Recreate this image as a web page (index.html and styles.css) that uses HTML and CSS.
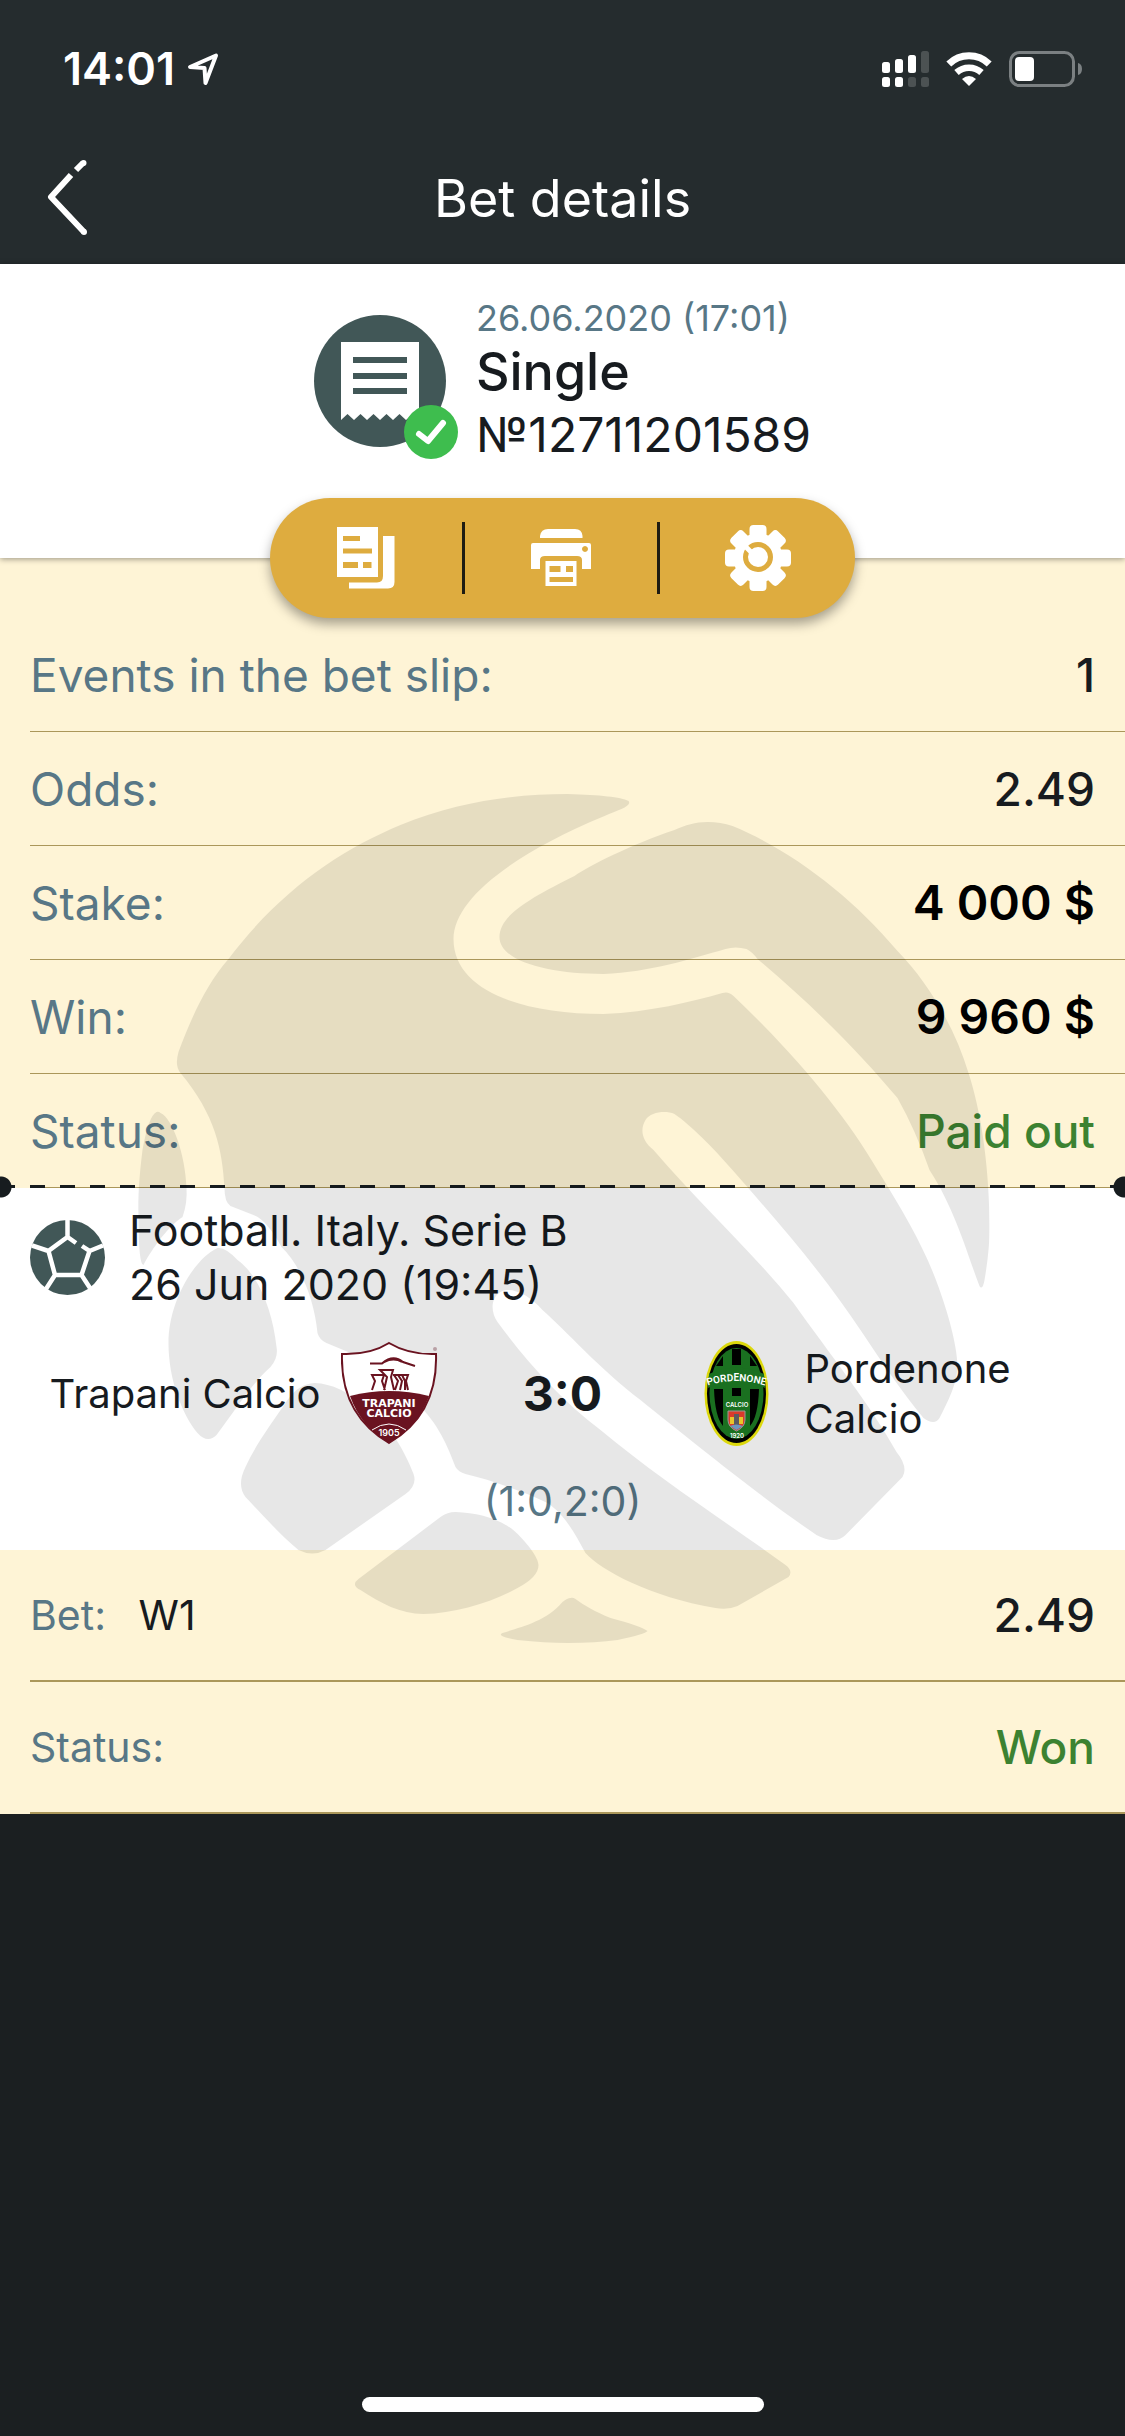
FILE: index.html
```html
<!DOCTYPE html>
<html lang="en">
<head>
  <meta charset="UTF-8" />
  <meta name="viewport" content="width=device-width, initial-scale=1.0" />
  <title>Bet details</title>
  <link rel="stylesheet" href="styles.css">
</head>
<body>

  <header class="top">
    <!-- Status bar -->
    <div class="status-bar">
      <div class="clock">
        <span>14:01</span>
        <svg width="32" height="34" viewBox="0 0 32 34" aria-hidden="true">
          <path d="M3 15 L29 3.500 L18.500 31 L17.500 16 Z" fill="none" stroke="#fff" stroke-width="4" stroke-linejoin="round" />
        </svg>
      </div>
      <div class="indicators">
        <svg width="47" height="36" viewBox="0 0 47 36" fill="#fff" aria-hidden="true">
          <rect x="0" y="11" width="8" height="11" rx="2.500" />
          <rect x="13" y="8" width="8" height="14" rx="2.500" />
          <rect x="26" y="4" width="8" height="18" rx="2.500" />
          <rect x="39" y="0" width="8" height="22" rx="2.500" opacity=".18" />
          <rect x="0" y="26" width="8" height="10" rx="2.500" />
          <rect x="13" y="26" width="8" height="10" rx="2.500" />
          <rect x="26" y="26" width="8" height="10" rx="2.500" opacity=".18" />
          <rect x="39" y="26" width="8" height="10" rx="2.500" opacity=".18" />
        </svg>
        <svg width="46" height="34" viewBox="0 0 46 34" aria-hidden="true">
          <path d="M2.800 12 A29 29 0 0 1 43.200 12" fill="none" stroke="#fff" stroke-width="7" />
          <path d="M10.500 20.500 A18.500 18.500 0 0 1 35.500 20.500" fill="none" stroke="#fff" stroke-width="6.500" />
          <path d="M23 34 L16 27 Q23 21 30 27 Z" fill="#fff" />
        </svg>
        <svg width="74" height="36" viewBox="0 0 74 36" aria-hidden="true">
          <rect x="1.500" y="1.500" width="63" height="33" rx="9" fill="none" stroke="#7b8082" stroke-width="3" />
          <rect x="6" y="6" width="19" height="24" rx="4" fill="#fff" />
          <path d="M69 12 Q73 13 73 18 Q73 23 69 24 Z" fill="#7b8082" />
        </svg>
      </div>
    </div>

    <nav class="nav-bar">
      <button class="back" aria-label="Back">
        <svg width="42" height="78" viewBox="0 0 42 78" fill="none" stroke="#fff" stroke-width="6" aria-hidden="true">
          <path d="M24 16 L4 38 L37 73" stroke-linejoin="round" />
          <path d="M29 11 L36 4" />
          <circle cx="36.500" cy="4" r="3" fill="#fff" stroke="none" />
          <circle cx="37" cy="73" r="3" fill="#fff" stroke="none" />
        </svg>
      </button>
      <h1>Bet details</h1>
    </nav>
  </header>

  <main>
    <!-- Bet slip heading -->
    <section class="slip">
      <div class="slip-head">
        <div class="slip-icon">
          <svg width="132" height="132" viewBox="0 0 132 132" aria-hidden="true">
            <circle cx="66" cy="66" r="66" fill="#415757" />
            <path d="M27 27 H105 V105 L98.500 99 L92 105 L85.500 99 L79 105 L72.500 99 L66 105 L59.500 99 L53 105 L46.500 99 L40 105 L33.500 99 L27 105 Z" fill="#fff" />
            <path d="M39 45 H93 M39 61 H93 M39 76 H93" stroke="#415757" stroke-width="6" />
          </svg>
          <svg class="badge" width="54" height="54" viewBox="0 0 54 54" aria-hidden="true">
            <circle cx="27" cy="27" r="27" fill="#3ebd4e" />
            <path d="M15 29 L24 36 L39 18" fill="none" stroke="#fff" stroke-width="6" stroke-linecap="round" stroke-linejoin="round" />
          </svg>
        </div>
        <div class="slip-text">
          <p class="date">26.06.2020 (17:01)</p>
          <h2>Single</h2>
          <p class="number">№12711201589</p>
        </div>
      </div>

      <div class="actions">
        <button aria-label="Copy">
          <svg width="58" height="62" viewBox="0 0 58 62" fill="#fff" aria-hidden="true">
            <path fill-rule="evenodd" d="M0 0 H41 V50 H0 Z M6 9 V14 H23 V9 Z M6 21.500 V26.500 H35 V21.500 Z M6 35 V41 H21 V35 Z M26 35 V41 H34.500 V35 Z" />
            <path d="M46 9 H57.500 V55 Q57.500 61.500 51 61.500 H12 V55.500 H40 Q46 55.500 46 49 Z" />
          </svg>
        </button>
        <button aria-label="Print">
          <svg width="60" height="58" viewBox="0 0 60 58" fill="#fff" aria-hidden="true">
            <path d="M9 9 V7 Q10 0 17 0 H44 Q51 0 51.500 7 V9 Z" />
            <path fill-rule="evenodd" d="M2 14 H58 Q60 14 60 16 V40 H51 V31 Q51 27 46 27 H14 Q9 27 9 31 V40 H0 V16 Q0 14 2 14 Z M54 17 a3 3 0 1 0 .01 0 Z" />
            <path fill-rule="evenodd" d="M14.500 32 H45.500 V57 H14.500 Z M18.500 37 V43 H29.500 V37 Z M35 37 V43 H42 V37 Z M18.500 48 V53 H42 V48 Z" />
          </svg>
        </button>
        <button aria-label="Settings">
          <svg width="66" height="66" viewBox="-33 -33 66 66" fill="#fff" aria-hidden="true">
            <circle r="24.500" />
            <g id="teeth">
              <rect x="-8.500" y="-33" width="17" height="66" rx="4" />
              <rect x="-33" y="-8.500" width="66" height="17" rx="4" />
            </g>
            <use href="#teeth" transform="rotate(45)" />
            <circle cy="-1" r="12.500" fill="none" stroke="#deac3f" stroke-width="5" />
            <path d="M-14 -13 L-4 -3" stroke="#fff" stroke-width="5" />
          </svg>
        </button>
      </div>
    </section>

    <div class="details">
      <!-- Ball watermark over the slip -->
      <svg class="watermark" width="853" height="850" viewBox="136 793 853 850" aria-hidden="true">
        <path d="M628 801 C632 806 618 810 604 816 C510 855 453 900 453 939 C453 990 520 1014 603 1014 C650 1012 690 1002 722 993 Q728 991 733 996 C795 1055 845 1115 877 1170 C905 1215 925 1250 938 1287 C950 1320 957 1350 957 1367 C956 1385 948 1400 939 1418 Q934 1426 923 1418 C900 1390 880 1360 862 1333 C820 1270 780 1225 732 1170 C712 1147 690 1125 674 1114 C665 1110 650 1112 645 1120 C640 1128 640 1140 653 1150 C700 1205 750 1250 793 1303 C830 1355 870 1405 896 1452 Q908 1467 902 1477 L845 1535 Q835 1545 816 1535 C760 1497 690 1440 640 1400 C600 1370 565 1330 542 1310 C528 1294 510 1286 500 1292 C490 1298 490 1312 497 1322 C525 1360 560 1400 600 1430 C660 1480 730 1525 785 1565 Q793 1571 788 1577 L737 1606 Q728 1610 715 1608 C650 1597 600 1570 585 1553 C575 1535 565 1515 547 1503 C520 1490 490 1480 465 1474 Q458 1472 455 1467 C445 1440 435 1420 413 1400 C400 1385 385 1367 367 1360 L326 1343 Q319 1340 317 1333 C314 1300 300 1265 281 1247 C272 1230 262 1218 253 1215 L230 1206 Q224 1202 224 1188 C222 1150 215 1115 180 1073 Q174 1066 178 1052 C190 1020 205 985 228 959 C280 890 340 850 400 825 C460 800 520 794 567 794 C600 795 620 797 628 801 Z" />
        <path d="M707 822 C695 822 685 825 674 830 C630 845 590 865 574 876 C530 898 499 915 499 937 C499 962 550 974 603 974 C650 972 690 959 725 949 Q735 946 746 949 Q752 952 757 959 C820 1012 865 1060 897 1098 Q915 1130 929 1170 C955 1210 967 1255 979 1286 Q982 1291 984 1280 Q990 1245 989 1220 C988 1160 980 1110 968 1073 C955 1030 930 985 897 951 C850 895 790 850 732 826 Q720 822 707 822 Z" />
        <path d="M156 1112 Q148 1116 142 1150 Q137 1190 138 1215 Q138 1265 143 1265 C148 1255 165 1228 182 1217 Q187 1203 186 1188 C185 1155 172 1118 160 1113 Q158 1111 156 1112 Z" />
        <path d="M217 1248 C195 1258 168 1300 168 1343 C168 1380 182 1415 197 1433 Q207 1444 216 1435 C235 1410 250 1385 270 1367 Q278 1358 276 1347 C272 1310 258 1275 237 1260 Q225 1247 217 1248 Z" />
        <path d="M314 1383 Q298 1384 287 1400 C270 1425 255 1445 245 1467 Q236 1485 245 1497 C262 1515 280 1535 298 1550 Q312 1557 325 1550 L405 1494 Q417 1485 413 1474 C402 1445 385 1420 364 1407 Q340 1384 314 1383 Z" />
        <path d="M455 1512 Q447 1512 440 1517 L358 1579 Q350 1585 360 1590 C380 1603 400 1614 423 1614 C455 1613 490 1603 517 1588 Q538 1577 538 1565 Q537 1555 520 1537 C505 1520 480 1513 455 1512 Z" />
        <path d="M570 1598 Q567 1598 562 1602 C545 1622 520 1627 502 1633 Q495 1636 517 1640 Q545 1643 567 1643 Q595 1643 617 1640 Q645 1634 647 1631 Q640 1626 610 1618 C595 1612 583 1605 575 1599 Q572 1597 570 1598 Z" />
      </svg>

      <!-- Slip totals -->
      <dl class="rows totals">
        <div class="row"><dt>Events in the bet slip:</dt><dd>1</dd></div>
        <div class="row"><dt>Odds:</dt><dd>2.49</dd></div>
        <div class="row"><dt>Stake:</dt><dd class="money">4 000 $</dd></div>
        <div class="row"><dt>Win:</dt><dd class="money">9 960 $</dd></div>
        <div class="row"><dt>Status:</dt><dd class="good">Paid out</dd></div>
      </dl>

      <!-- Match -->
      <section class="match">
        <div class="match-head">
          <svg width="75" height="75" viewBox="0 0 75 75" aria-hidden="true">
            <circle cx="37.500" cy="37.500" r="37.500" fill="#415757" />
            <path d="M46 23 L37.500 17 L18.500 31 L25 55 H51.500 L59.500 31 L52 26 M37.500 17 V0 M18.500 31 L2 25.500 M59.500 31 L73 25.500 M25 55 L16 69 M51.500 55 L60 68" fill="none" stroke="#fff" stroke-width="4.500" />
          </svg>
          <p>Football. Italy. Serie B<br>26 Jun 2020 (19:45)</p>
        </div>

        <div class="teams">
          <div class="team home">
            <span>Trapani Calcio</span>
            <svg class="crest" width="97" height="105" viewBox="0 0 97 105" aria-hidden="true">
              <path d="M1 13 Q29 14 48 2 Q68 14 95 13 Q97 73 48 102 Q-1 73 1 13 Z" fill="#fff" />
              <path d="M9 55 Q48 45 88 55 Q77 86 48 102 Q20 86 9 55 Z" fill="#6a1320" />
              <path d="M1 13 Q29 14 48 2 Q68 14 95 13 Q97 73 48 102 Q-1 73 1 13 Z" fill="none" stroke="#6a1320" stroke-width="2" />
              <path d="M29 22.500 H41 Q52 13 62 21 L74 25 M43 21 Q53 16 61 21" fill="none" stroke="#6a1320" stroke-width="2" />
              <path d="M31 49 L34 40 L31 34 H43 L41 40 L44 49 M43 49 L46 36 L39 29 H52 L50 36 L53 49 M54 49 L57 40 L53 34 M59 49 L61 40 L57 34 M64 49 L64 40 L61 34 H67 L65 40 L67 49 M31 34 H44 M52 34 H67" fill="none" stroke="#6a1320" stroke-width="2" />
              <text class="crest-text wide" x="48" y="66">TRAPANI</text>
              <text class="crest-text wide" x="48" y="76">CALCIO</text>
              <path d="M31 89 Q48 77 65 89" fill="none" stroke="#fff" stroke-width="1" />
              <text class="crest-text year" x="48" y="95">1905</text>
              <circle cx="94" cy="8" r="2" fill="#b9a0a5" />
            </svg>
          </div>
          <strong class="score">3:0</strong>
          <div class="team away">
            <svg class="crest" width="97" height="105" viewBox="-16 0 97 105" aria-hidden="true">
              <ellipse cx="32.500" cy="52.500" rx="32" ry="52.500" fill="#dcd80c" />
              <ellipse cx="32.500" cy="52.500" rx="29.500" ry="49.500" fill="#000" />
              <ellipse cx="32.500" cy="52.500" rx="27" ry="45.500" fill="#1a7020" />
              <path d="M28 8 H37 V24 H28 Z M28 47 H37 V55 H28 Z M19 15 V25 H12 Z M46 15 V25 H53 Z M10 48 H19 V85 Q11 76 10 48 Z M46 48 H55 Q54 76 46 85 Z" fill="#000" />
              <path d="M4 47 Q32 32 61 47 L60 33 Q32 20 5 33 Z" fill="#1a7020" />
              <path id="arch" d="M2 45 Q32 35 63 45" fill="none" />
              <text class="crest-text name"><textPath href="#arch" startOffset="50%">PORDENONE</textPath></text>
              <text class="crest-text small" x="33" y="66">CALCIO</text>
              <path d="M24 70 H41 V79 Q41 86 32.500 90 Q24 86 24 79 Z" fill="#d93a2b" stroke="#999" stroke-width="1" />
              <path d="M26 76 H30 V83 H26 Z M35 76 H39 V83 H35 Z" fill="#e8c52a" />
              <path d="M30 73 H35 V84 H30 Z" fill="#5a5a60" />
              <path d="M26 85 Q32 82 39 85 L32.500 89 Z" fill="#6b97c0" />
              <text class="crest-text small" x="33" y="97">1920</text>
            </svg>
            <span>Pordenone Calcio</span>
          </div>
        </div>

        <p class="periods">(1:0,2:0)</p>
      </section>

      <!-- Selection -->
      <dl class="rows selection">
        <div class="row"><dt>Bet: <span class="pick">W1</span></dt><dd>2.49</dd></div>
        <div class="row"><dt>Status:</dt><dd class="good">Won</dd></div>
      </dl>
    </div>
  </main>

  <footer class="home-indicator"></footer>

</body>
</html>
```
FILE: styles.css
```css
* {
  box-sizing: border-box;
}

body {
  margin: 0;
  min-height: 100vh;
  display: flex;
  flex-direction: column;
  font-family: Inter, "Liberation Sans", sans-serif;
  color: #171b1f;
  background-color: #1b1f21;
  overflow-x: hidden;
}

h1, h2, p, dl, dd {
  margin: 0;
}

button {
  padding: 0;
  border: none;
  background: none;
  cursor: pointer;
}

svg {
  display: block;
  flex-shrink: 0;
}

.top {
  background-color: #252c2e;
  color: white;
}

.status-bar {
  height: 132px;
  padding: 5px 42px 0 63px;
  display: flex;
  justify-content: space-between;
  align-items: center;
}

.clock {
  display: flex;
  align-items: center;
  gap: 12px;
  font-size: 45px;
  font-weight: 600;
}

.indicators {
  display: flex;
  align-items: center;
  gap: 17px;
}

.nav-bar {
  height: 132px;
  padding: 0 47px;
  display: grid;
  grid-template-columns: 1fr auto 1fr;
  align-items: center;
}

.back {
  justify-self: start;
}

.nav-bar h1 {
  font-size: 52px;
  font-weight: 400;
}

.slip {
  position: relative;
  z-index: 2;
  display: flow-root;
  padding-top: 33px;
  background: white;
  box-shadow: 0 1px 6px rgba(0, 0, 0, 0.4);
}

.slip-head {
  display: flex;
  justify-content: center;
  align-items: center;
  gap: 30px;
}

.slip-icon {
  position: relative;
}

.badge {
  position: absolute;
  right: -12px;
  bottom: -12px;
}

.date {
  font-size: 36px;
  line-height: 42px;
  color: #587786;
}

.slip-text h2 {
  font-size: 52px;
  line-height: 66px;
  font-weight: 500;
}

.number {
  font-size: 48px;
  line-height: 60px;
}

.actions {
  width: 585px;
  height: 120px;
  margin: 33px auto -60px;
  display: grid;
  grid-template-columns: repeat(3, 1fr);
  align-items: center;
  border-radius: 60px;
  background-color: #deac3f;
  box-shadow: 0 6px 12px rgba(0, 0, 0, 0.35);
}

.actions button {
  height: 72px;
  display: flex;
  justify-content: center;
  align-items: center;
  border-right: 3px solid #1f1c12;
}

.actions button:last-child {
  border-right: none;
}

.details {
  position: relative;
  background-color: #fef4d6;
}

.watermark {
  position: absolute;
  top: 235px;
  left: 50%;
  transform: translateX(-50%);
  z-index: 1;
  opacity: 0.09;
  pointer-events: none;
}

.rows {
  padding-left: 30px;
}

.row {
  height: 114px;
  padding-right: 30px;
  display: flex;
  justify-content: space-between;
  align-items: center;
  border-bottom: 1px solid #ab975a;
  font-size: 46px;
}

.row dt {
  color: #587786;
}

.row dd {
  font-weight: 500;
}

.row .money {
  color: black;
  font-size: 48px;
  font-weight: 600;
}

.row .good {
  color: #3c8231;
}

.totals {
  padding-top: 60px;
}

.match {
  position: relative;
  padding: 15px 30px 24px;
  background: white;
}

/* tear line between the slip and the match */
.match::before {
  content: "";
  position: absolute;
  top: -3px;
  left: 0;
  right: 0;
  height: 3px;
  background: repeating-linear-gradient(90deg, #171c1f 0 15px, transparent 15px 30px);
}

.match::after {
  content: "";
  position: absolute;
  top: -12px;
  left: -10px;
  right: -10px;
  height: 22px;
  background:
    radial-gradient(circle, #171c1f 10px, transparent 11px) left / 22px 22px no-repeat,
    radial-gradient(circle, #171c1f 10px, transparent 11px) right / 22px 22px no-repeat;
}

.match-head {
  display: flex;
  align-items: center;
  gap: 24px;
  font-size: 43px;
  line-height: 54px;
}

.teams {
  margin: 30px 0;
  display: grid;
  grid-template-columns: 1fr 250px 1fr;
  align-items: center;
  font-size: 40px;
  line-height: 50px;
}

.team {
  display: flex;
  align-items: center;
  gap: 20px;
}

.home {
  justify-content: flex-end;
  text-align: right;
}

.crest {
  position: relative;
  z-index: 2;
}

.crest-text {
  font-weight: 600;
  text-anchor: middle;
  fill: white;
}

.crest-text.wide {
  font-family: "DejaVu Sans", sans-serif;
  font-size: 11px;
}

.crest-text.name {
  font-family: Roboto, sans-serif;
  font-size: 10px;
}

.crest-text.year {
  font-size: 9px;
}

.crest-text.small {
  font-size: 6px;
}

.score {
  font-size: 48px;
  text-align: center;
}

.periods {
  font-size: 41px;
  line-height: 50px;
  text-align: center;
  color: #587786;
}

.selection .row {
  height: 132px;
  border-bottom-width: 2px;
}

.selection dt {
  font-size: 41px;
}

.pick {
  margin-left: 21px;
  color: #171b1f;
}

.home-indicator {
  width: 402px;
  height: 15px;
  margin: auto auto 24px;
  border-radius: 8px;
  background: white;
}
```
